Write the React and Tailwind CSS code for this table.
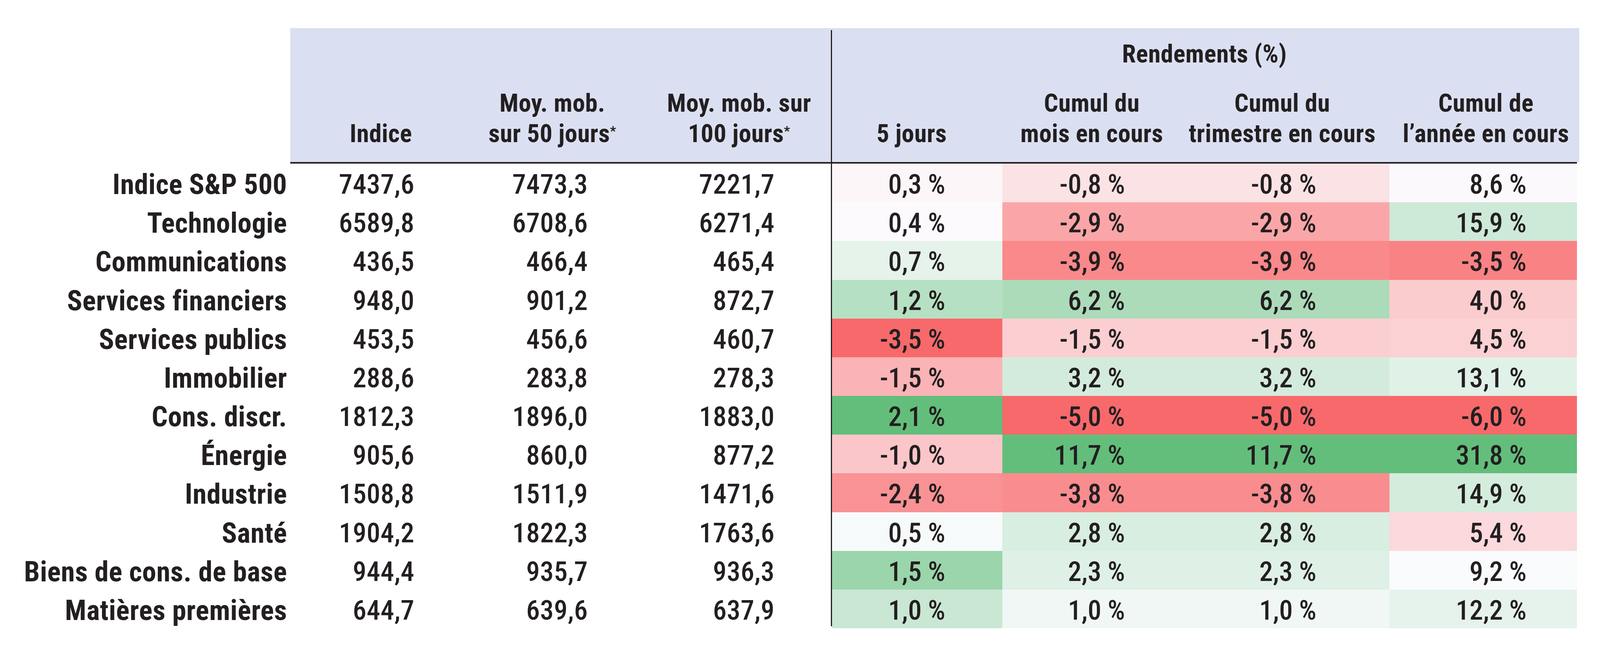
import React from 'react';

// Excel-like 3 colour scale: min red, median white, max green
const MIN = [248, 105, 107];
const MID = [252, 252, 255];
const MAX = [99, 190, 123];

const rows = [
  ['Indice S&P 500', '7437,6', '7473,3', '7221,7', 0.3, -0.8, -0.8, 8.6],
  ['Technologie', '6589,8', '6708,6', '6271,4', 0.4, -2.9, -2.9, 15.9],
  ['Communications', '436,5', '466,4', '465,4', 0.7, -3.9, -3.9, -3.5],
  ['Services financiers', '948,0', '901,2', '872,7', 1.2, 6.2, 6.2, 4.0],
  ['Services publics', '453,5', '456,6', '460,7', -3.5, -1.5, -1.5, 4.5],
  ['Immobilier', '288,6', '283,8', '278,3', -1.5, 3.2, 3.2, 13.1],
  ['Cons. discr.', '1812,3', '1896,0', '1883,0', 2.1, -5.0, -5.0, -6.0],
  ['Énergie', '905,6', '860,0', '877,2', -1.0, 11.7, 11.7, 31.8],
  ['Industrie', '1508,8', '1511,9', '1471,6', -2.4, -3.8, -3.8, 14.9],
  ['Santé', '1904,2', '1822,3', '1763,6', 0.5, 2.8, 2.8, 5.4],
  ['Biens de cons. de base', '944,4', '935,7', '936,3', 1.5, 2.3, 2.3, 9.2],
  ['Matières premières', '644,7', '639,6', '637,9', 1.0, 1.0, 1.0, 12.2],
];

const median = (arr) => {
  const s = [...arr].sort((a, b) => a - b);
  const m = s.length / 2;
  return s.length % 2 ? s[Math.floor(m)] : (s[m - 1] + s[m]) / 2;
};

const mix = (a, b, t) => a.map((v, i) => Math.round(v + (b[i] - v) * t));

const scales = [4, 5, 6, 7].map((col) => {
  const vals = rows.map((r) => r[col]);
  return { min: Math.min(...vals), mid: median(vals), max: Math.max(...vals) };
});

const cellColor = (v, s) => {
  const c = v <= s.mid
    ? mix(MIN, MID, (v - s.min) / (s.mid - s.min))
    : mix(MID, MAX, (v - s.mid) / (s.max - s.mid));
  return `rgb(${c[0]}, ${c[1]}, ${c[2]})`;
};

const fmt = (v) => v.toFixed(1).replace('.', ',') + ' %';

const cols = 'grid grid-cols-[743px_377px_517px_490px_3px_436px_495px_496px_480px]';
const numPad = ['pr-[59px]', 'pr-[132px]', 'pr-[144px]'];
const pctPad = ['pr-[146px]', 'pr-[181px]', 'pr-[187px]', 'pr-[129px]'];

const Star = () => <sup className="text-[34px]">*</sup>;

const App = () => {
  return (
    <div className="w-full min-h-[1716px] bg-white pt-[72px] text-[#231f20] font-['Roboto_Condensed','Liberation_Sans',sans-serif]">
      {/* header */}
      <div className="grid grid-cols-[743px_377px_517px_490px_3px_436px_495px_496px_486px] grid-rows-[106px_237px] h-[343px] text-[64px] font-bold leading-[78px] tracking-[0.5px] whitespace-nowrap">
        <div className="row-span-2" />
        <div className="row-span-2 bg-[#dae0f1] flex items-end justify-center pl-[87px] pb-[33px]">Indice</div>
        <div className="row-span-2 bg-[#dae0f1] flex flex-col items-center justify-end pl-[71px] pb-[33px]">
          <span>Moy. mob.</span>
          <span>sur 50 jours<Star /></span>
        </div>
        <div className="row-span-2 bg-[#dae0f1] flex flex-col items-center justify-end pl-[20px] pb-[33px]">
          <span>Moy. mob. sur</span>
          <span>100 jours<Star /></span>
        </div>
        <div className="row-span-2 bg-[#dae0f1] pt-[5px] flex">
          <div className="flex-1 bg-[#231f20]" />
        </div>
        <div className="col-span-4 bg-[#dae0f1] pt-[28px] text-center pr-[6px]">Rendements (%)</div>
        <div className="bg-[#dae0f1] flex items-end justify-center pr-[28px] pb-[33px]">5 jours</div>
        <div className="bg-[#dae0f1] flex flex-col items-center justify-end pr-[37px] pb-[33px]">
          <span>Cumul du</span>
          <span>mois en cours</span>
        </div>
        <div className="bg-[#dae0f1] flex flex-col items-center justify-end pr-[53px] pb-[33px]">
          <span>Cumul du</span>
          <span>trimestre en cours</span>
        </div>
        <div className="bg-[#dae0f1] flex flex-col items-center justify-end pl-[8px] pb-[33px]">
          <span>Cumul de</span>
          <span>l’année en cours</span>
        </div>
      </div>
      <div className="flex">
        <div className="w-[743px]" />
        <div className="w-[3294px] h-[4px] bg-[#231f20]" />
      </div>

      {/* body */}
      <div className="flex flex-col h-[1190px]">
        {rows.map((r, i) => {
          const last = i === rows.length - 1;
          return (
            <div key={r[0]} className={`${cols} flex-1 whitespace-nowrap`}>
              <div className="text-right pr-[8px] text-[72px] font-bold tracking-[0.5px] leading-[91px] pt-[8px]">{r[0]}</div>
              {[1, 2, 3].map((c, k) => (
                <div key={c} className={`text-right text-[70px] font-medium tracking-[0.5px] leading-[91px] pt-[8px] ${numPad[k]}`}>{r[c]}</div>
              ))}
              <div className={last ? 'bg-[#231f20] mb-[5px]' : 'bg-[#231f20]'} />
              {[4, 5, 6, 7].map((c, k) => (
                <div
                  key={c}
                  className={`text-right text-[70px] font-medium leading-[91px] pt-[8px] ${pctPad[k]}`}
                  style={{ backgroundColor: cellColor(r[c], scales[k]) }}
                >
                  {fmt(r[c])}
                </div>
              ))}
            </div>
          );
        })}
      </div>
    </div>
  );
};

export default App;
